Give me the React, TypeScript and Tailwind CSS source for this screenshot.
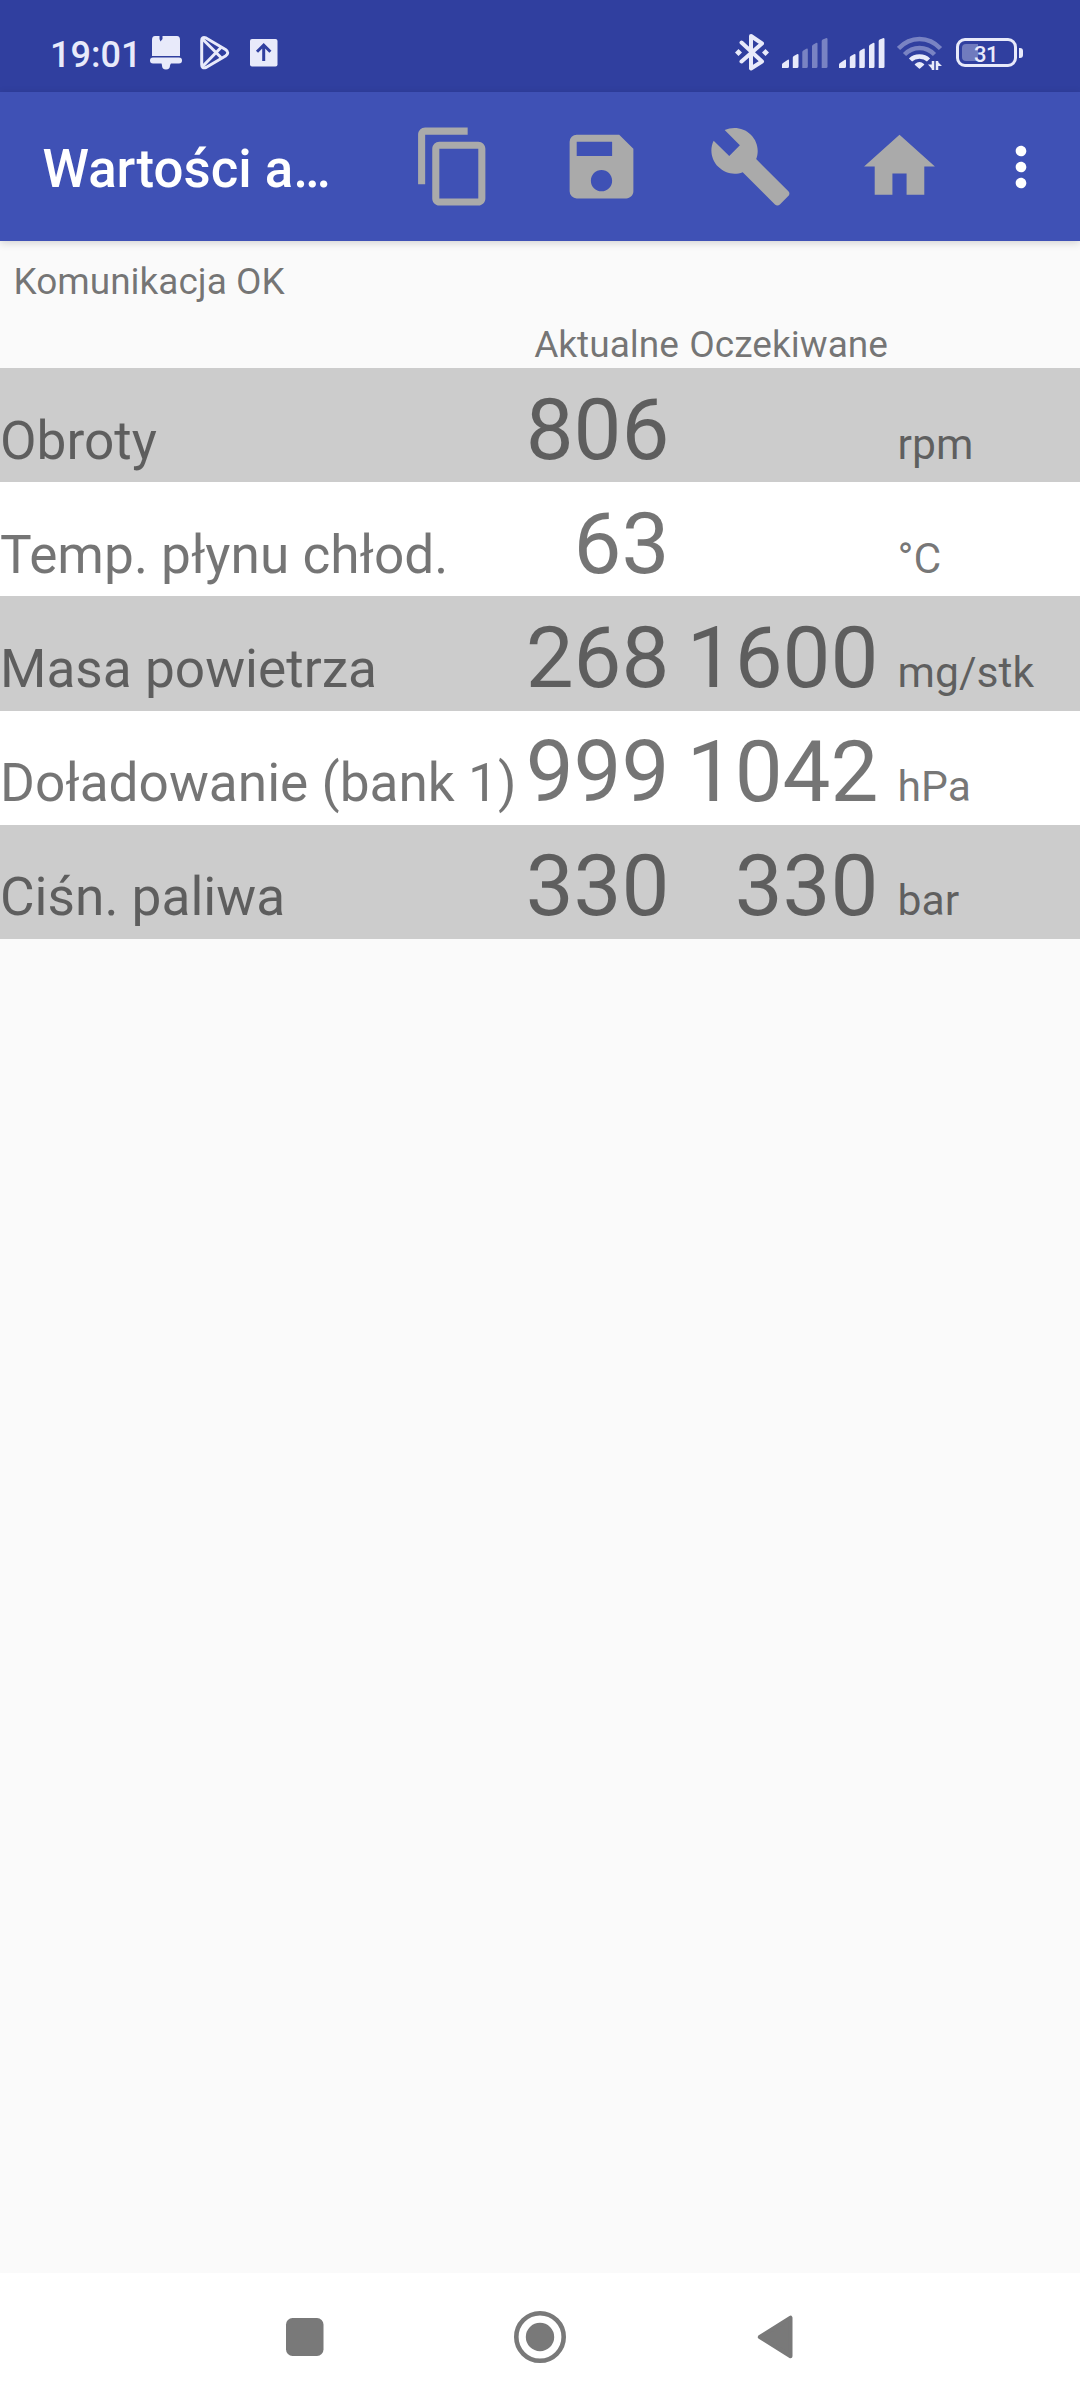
import clsx from "clsx";
import { MdContentCopy, MdSave, MdBuild, MdHome, MdMoreVert } from "react-icons/md";

const rows = [
  { label: "Obroty", actual: "806", expected: "", unit: "rpm" },
  { label: "Temp. płynu chłod.", actual: "63", expected: "", unit: "°C" },
  { label: "Masa powietrza", actual: "268", expected: "1600", unit: "mg/stk" },
  { label: "Doładowanie (bank 1)", actual: "999", expected: "1042", unit: "hPa" },
  { label: "Ciśn. paliwa", actual: "330", expected: "330", unit: "bar" },
];

function Signal({ level, className }: { level: number; className?: string }) {
  const bars = [
    "M0 30v-3.5q0-1 1-1.5l4.500-3q1.500-1 1.500.500V28.500Q7 30 5.500 30z",
    "M10.800 30V19.500q0-1 1-1.500l3.200-1.700q1.500-.7 1.500.7V28.500q0 1.500-1.500 1.500z",
    "M20.300 30V14q0-1 1-1.500l3-1.700q1.500-.7 1.500.7V28.500q0 1.500-1.500 1.500z",
    "M30 30V8.300q0-1 1-1.500l3-1.700q1.500-.7 1.500.7V28.500q0 1.500-1.500 1.500z",
    "M39.700 30V3q0-1 1-1.500l3.200-1.300q1.600-.4 1.600 1V28.500q0 1.500-1.500 1.500z",
  ];
  return (
    <svg viewBox="0 0 46 30" className={clsx("w-[46px] h-[30px]", className)} fill="currentColor">
      {bars.map((d, i) => (
        <path key={i} d={d} opacity={i < level ? 1 : 0.4} />
      ))}
    </svg>
  );
}

function StatusBar() {
  return (
    <div className="h-[92px] bg-[#303f9f] text-[#e8eafa] flex items-start pl-[50px]">
      <span className="w-[100px] pt-[34px] text-[36px] leading-[42px] font-medium">19:01</span>

      {/* bell */}
      <svg viewBox="0 0 32 34" className="w-8 h-[34px] mt-[36px]" fill="currentColor">
        <path d="M5 0h4.500v3l1 2.500L12.500 3V0H27q3 0 3 4v16H2V4q0-4 3-4z" />
        <rect x="0" y="21.500" width="32" height="6" rx="3" />
        <path d="M11.500 27h9.500l-1 2.500q0 4-4 4t-4-4z" />
      </svg>

      {/* play */}
      <svg viewBox="0 0 30 34" className="w-[30px] h-[34px] mt-[36px] ml-[18px]" fill="none" stroke="currentColor" strokeWidth="3" strokeLinejoin="round">
        <path d="M1.700 4.500Q1.700 0.500 6 2l19.500 11.500Q30 16.700 25.500 20L6 31.500q-4.300 1.500-4.300-3z" />
        <path d="M2.500 3l18.500 18.500M2.500 30.500L21 11.500" />
      </svg>

      {/* upload box */}
      <svg viewBox="0 0 28 28" className="w-7 h-7 mt-[39px] ml-5">
        <rect width="27.500" height="27.500" rx="2" fill="currentColor" />
        <path d="M13.700 22V6M7 12.700l6.700-6.700 6.700 6.700" fill="none" stroke="#303f9f" strokeWidth="3" />
      </svg>

      {/* bluetooth */}
      <svg viewBox="0 0 34 38" className="w-[34px] h-[38px] mt-[33px] ml-[457px]" fill="none" stroke="currentColor" strokeWidth="4" strokeLinejoin="round" strokeLinecap="round">
        <path d="M6.500 9.500L27 28.500 16 35.500V3L27 10.500 6.500 28.500" />
        <path d="M3.500 16l3.500 3.500L3.500 23 0 19.500zM30.500 16l3.500 3.500-3.500 3.500-3.500-3.500z" fill="currentColor" stroke="none" />
      </svg>

      <Signal level={2} className="mt-[38px] ml-[13px]" />
      <Signal level={5} className="mt-[38px] ml-[11px]" />

      {/* wifi */}
      <svg viewBox="0 0 46 34" className="w-[46px] h-[34px] mt-[36px] ml-[12px]" fill="none" stroke="currentColor" strokeWidth="4.500">
        <path d="M1.500 12.500Q10.500 3 22.500 3T43.500 12.500" opacity="0.4" />
        <path d="M7.500 18.500Q14 12 22.500 12T37.500 18.500" opacity="0.4" />
        <path d="M13.500 24Q17 20.500 22.500 20.500T31.500 24" />
        <path d="M18.500 28.500Q22.500 25 26.500 28.500L22.500 32z" fill="currentColor" strokeWidth="1.500" strokeLinejoin="round" />
        <path d="M36 25v9M40 34v-9" strokeWidth="2.500" />
        <path d="M31 28.500h5v5.500zM45 30h-5v-5z" fill="currentColor" stroke="none" />
      </svg>

      {/* battery */}
      <div className="relative flex items-center mt-[38px] ml-[13px]">
        <div className="w-[61px] h-[29px] rounded-[9px] border-[3px] border-current p-[3px]">
          <div className="w-[16px] h-full rounded-l-[4px] bg-current opacity-35" />
        </div>
        <div className="w-1 h-[10px] ml-[2px] rounded-r-[3px] bg-current" />
        <span className="absolute left-[18px] top-[3px] text-[22px] leading-[27px] font-medium tracking-[-0.5px]">31</span>
      </div>
    </div>
  );
}

function Toolbar() {
  return (
    <header className="relative z-10 h-[148.500px] bg-[#3f51b5] flex items-center pl-[42.500px] shadow-[0_2px_8px_rgba(0,0,0,0.16)]">
      <h1 className="w-[368px] pt-[5px] text-[52.800px] leading-[64px] font-medium text-white">Wartości a…</h1>
      <div className="flex gap-[63.800px] text-[#aaaaaa]">
        <MdContentCopy className="size-[85px]" />
        <MdSave className="size-[85px]" />
        <MdBuild className="size-[85px]" />
        <MdHome className="size-[85px]" />
      </div>
      <MdMoreVert className="size-[64px] ml-[47.500px] mt-px text-white" />
    </header>
  );
}

function NavBar() {
  return (
    <nav className="h-[127px] bg-white flex items-center justify-center gap-[183px] text-[#797979]">
      <svg viewBox="0 0 52 52" className="size-[52px]" fill="currentColor">
        <rect x="7" y="7" width="37.500" height="38" rx="6.500" />
      </svg>
      <svg viewBox="0 0 52 52" className="size-[52px]">
        <circle cx="26" cy="26" r="23.700" fill="none" stroke="currentColor" strokeWidth="4.600" />
        <circle cx="26" cy="26" r="14.200" fill="currentColor" />
      </svg>
      <svg viewBox="0 0 52 52" className="size-[52px]" fill="currentColor" stroke="currentColor" strokeWidth="4" strokeLinejoin="round">
        <path d="M10.800 26L41.500 6.700v38.600z" />
      </svg>
    </nav>
  );
}

export default function App() {
  return (
    <div className="w-[1080px] h-[2400px] flex flex-col bg-[#fafafa] font-[Roboto,sans-serif]">
      <StatusBar />
      <Toolbar />

      <main className="flex-1 text-black/54">
        <p className="pt-[19px] pl-[13.500px] text-[37px] leading-[44px]">Komunikacja OK</p>

        <div className="flex h-[64.500px] pt-[19px] text-[37.100px] leading-[44px]">
          <span className="w-[679px] text-right">Aktualne</span>
          <span className="w-[209px] text-right">Oczekiwane</span>
        </div>

        {rows.map((row, i) => (
          <div
            key={row.label}
            className={clsx("flex items-baseline h-[114.200px] pt-[5.500px] whitespace-nowrap", i % 2 === 0 ? "bg-[#cccccc]" : "bg-white")}
          >
            <span className="w-[520px] text-[53.200px]">{row.label}</span>
            <span className="w-[149.500px] text-right text-[85.300px] leading-[113px]">{row.actual}</span>
            <span className="w-[209px] text-right text-[85.300px] leading-[113px]">{row.expected}</span>
            <span className="pl-[19px] text-[42.700px]">{row.unit}</span>
          </div>
        ))}
      </main>

      <NavBar />
    </div>
  );
}
